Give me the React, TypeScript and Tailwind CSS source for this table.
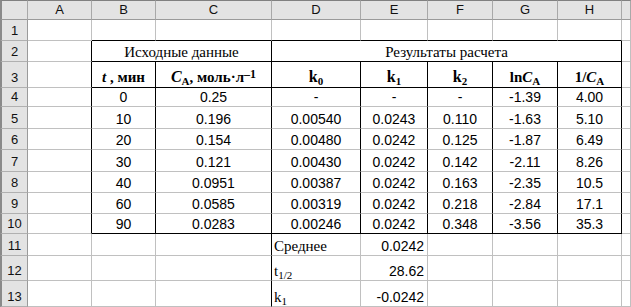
import React from "react";
import clsx from "clsx";

type Align = "c" | "l" | "r";

// Excel-like cell: each cell owns its right and bottom grid line
function Cell({
  rb,
  bb,
  span = "",
  align = "c",
  className = "",
  children,
}: {
  rb?: boolean;
  bb?: boolean;
  span?: string;
  align?: Align;
  className?: string;
  children?: React.ReactNode;
}) {
  return (
    <div
      className={clsx(
        "flex items-end overflow-hidden whitespace-nowrap border-r border-b leading-[16px] pb-[1px]",
        rb ? "border-r-black" : "border-r-[#c0c0c0]",
        bb ? "border-b-black" : "border-b-[#c0c0c0]",
        align === "c" && "justify-center",
        align === "l" && "justify-start pl-[2px]",
        align === "r" && "justify-end pr-[3px]",
        span,
        className
      )}
    >
      {children}
    </div>
  );
}

function ColHead({ label, first }: { label?: string; first?: boolean }) {
  return (
    <div
      className={clsx(
        "flex items-center justify-center border-t border-b border-r border-t-[#808080] border-b-[#9a9a9a] border-r-[#a8a8a8] bg-[#e3e3e3] text-[13px] text-[#111]",
        first && "border-l-2 border-l-[#8a8a8a]"
      )}
    >
      {label}
    </div>
  );
}

function RowHead({ n }: { n: number }) {
  return (
    <div className="flex items-end justify-center border-l-2 border-l-[#8a8a8a] border-r border-r-[#9a9a9a] border-b border-b-[#b0b0b0] bg-[#e3e3e3] pb-[1px] text-[13px] leading-[16px] text-[#111]">
      {n}
    </div>
  );
}

const data = [
  ["0", "0.25", "-", "-", "-", "-1.39", "4.00"],
  ["10", "0.196", "0.00540", "0.0243", "0.110", "-1.63", "5.10"],
  ["20", "0.154", "0.00480", "0.0242", "0.125", "-1.87", "6.49"],
  ["30", "0.121", "0.00430", "0.0242", "0.142", "-2.11", "8.26"],
  ["40", "0.0951", "0.00387", "0.0242", "0.163", "-2.35", "10.5"],
  ["60", "0.0585", "0.00319", "0.0242", "0.218", "-2.84", "17.1"],
  ["90", "0.0283", "0.00246", "0.0242", "0.348", "-3.56", "35.3"],
];

// black border segments of the results table
const vBlack = (r: number, c: number) =>
  (c === 1 && r >= 2 && r <= 10) ||
  (c === 3 && r >= 2 && r <= 13) ||
  (c === 2 && r >= 3 && r <= 10) ||
  (c >= 4 && c <= 7 && r >= 3 && r <= 10) ||
  (c === 8 && r >= 2 && r <= 10);

const hBlack = (r: number, c: number) =>
  (r === 1 || r === 2 || r === 3 || r === 10) && c >= 2 && c <= 8;

const serif = "font-['Liberation_Serif','DejaVu_Serif',serif]";

export default function App() {
  const letters = ["A", "B", "C", "D", "E", "F", "G", "H", ""];

  return (
    <div className="h-[307px] w-[631px] overflow-hidden bg-white font-['Liberation_Sans',Arial,sans-serif] text-[14px] text-black">
      <div className="grid grid-cols-[28px_64px_64px_116px_89px_67px_65px_65px_64px_1fr] grid-rows-[20px_21px_21px_26px_19px_22px_21px_22px_21px_21px_20px_22px_25px_26px]">
        {/* column headers */}
        <ColHead first />
        {letters.map((l, i) => (
          <ColHead key={i} label={l} />
        ))}

        {/* row 1 */}
        <RowHead n={1} />
        {[1, 2, 3, 4, 5, 6, 7, 8, 9].map((c) => (
          <Cell key={c} rb={vBlack(1, c)} bb={hBlack(1, c)} />
        ))}

        {/* row 2 */}
        <RowHead n={2} />
        <Cell rb />
        <Cell rb bb span="col-span-2" className={clsx(serif, "text-[15px]")}>
          Исходные данные
        </Cell>
        <Cell rb bb span="col-start-5 col-end-10" className={clsx(serif, "text-[15px]")}>
          Результаты расчета
        </Cell>
        <Cell />

        {/* row 3 */}
        <RowHead n={3} />
        <Cell rb />
        <Cell rb bb className={clsx(serif, "text-[15px] font-bold pb-[2px]")}>
          <i>t</i>&nbsp;, мин
        </Cell>
        <Cell rb bb className={clsx(serif, "text-[15px] font-bold pb-[2px]")}>
          <span>
            <i className="text-[16px]">C</i>
            <sub className="text-[11px]">A</sub>, моль·л
            <sup className="relative -top-[4px] text-[12px]">–1</sup>
          </span>
        </Cell>
        <Cell rb bb className={clsx(serif, "text-[16px] font-bold pb-[2px]")}>
          <span>
            k<sub className="text-[11px]">0</sub>
          </span>
        </Cell>
        <Cell rb bb className={clsx(serif, "text-[16px] font-bold pb-[2px]")}>
          <span>
            k<sub className="text-[11px]">1</sub>
          </span>
        </Cell>
        <Cell rb bb className={clsx(serif, "text-[16px] font-bold pb-[2px]")}>
          <span>
            k<sub className="text-[11px]">2</sub>
          </span>
        </Cell>
        <Cell rb bb className={clsx(serif, "text-[15px] font-bold pb-[2px]")}>
          <span>
            ln<i>C</i>
            <sub className="text-[11px]">A</sub>
          </span>
        </Cell>
        <Cell rb bb className={clsx(serif, "text-[15px] font-bold pb-[2px]")}>
          <span>
            1/<i>C</i>
            <sub className="text-[11px]">A</sub>
          </span>
        </Cell>
        <Cell />

        {/* rows 4-10 */}
        {data.map((row, i) => {
          const r = i + 4;
          return (
            <React.Fragment key={r}>
              <RowHead n={r} />
              <Cell rb={vBlack(r, 1)} bb={hBlack(r, 1)} />
              {row.map((v, j) => (
                <Cell key={j} rb={vBlack(r, j + 2)} bb={hBlack(r, j + 2)}>
                  {v}
                </Cell>
              ))}
              <Cell />
            </React.Fragment>
          );
        })}

        {/* rows 11-13 */}
        <RowHead n={11} />
        <Cell />
        <Cell />
        <Cell rb />
        <Cell align="l" className={clsx(serif, "text-[15px]")}>
          Среднее
        </Cell>
        <Cell align="r">0.0242</Cell>
        <Cell />
        <Cell />
        <Cell />
        <Cell />

        <RowHead n={12} />
        <Cell />
        <Cell />
        <Cell rb />
        <Cell align="l" className={clsx(serif, "text-[15px]")}>
          <span>
            t<sub className="text-[11px]">1/2</sub>
          </span>
        </Cell>
        <Cell align="r">28.62</Cell>
        <Cell />
        <Cell />
        <Cell />
        <Cell />

        <RowHead n={13} />
        <Cell />
        <Cell />
        <Cell rb />
        <Cell align="l" className={clsx(serif, "text-[15px]")}>
          <span>
            k<sub className="text-[11px]">1</sub>
          </span>
        </Cell>
        <Cell align="r">-0.0242</Cell>
        <Cell />
        <Cell />
        <Cell />
        <Cell />
      </div>
    </div>
  );
}
